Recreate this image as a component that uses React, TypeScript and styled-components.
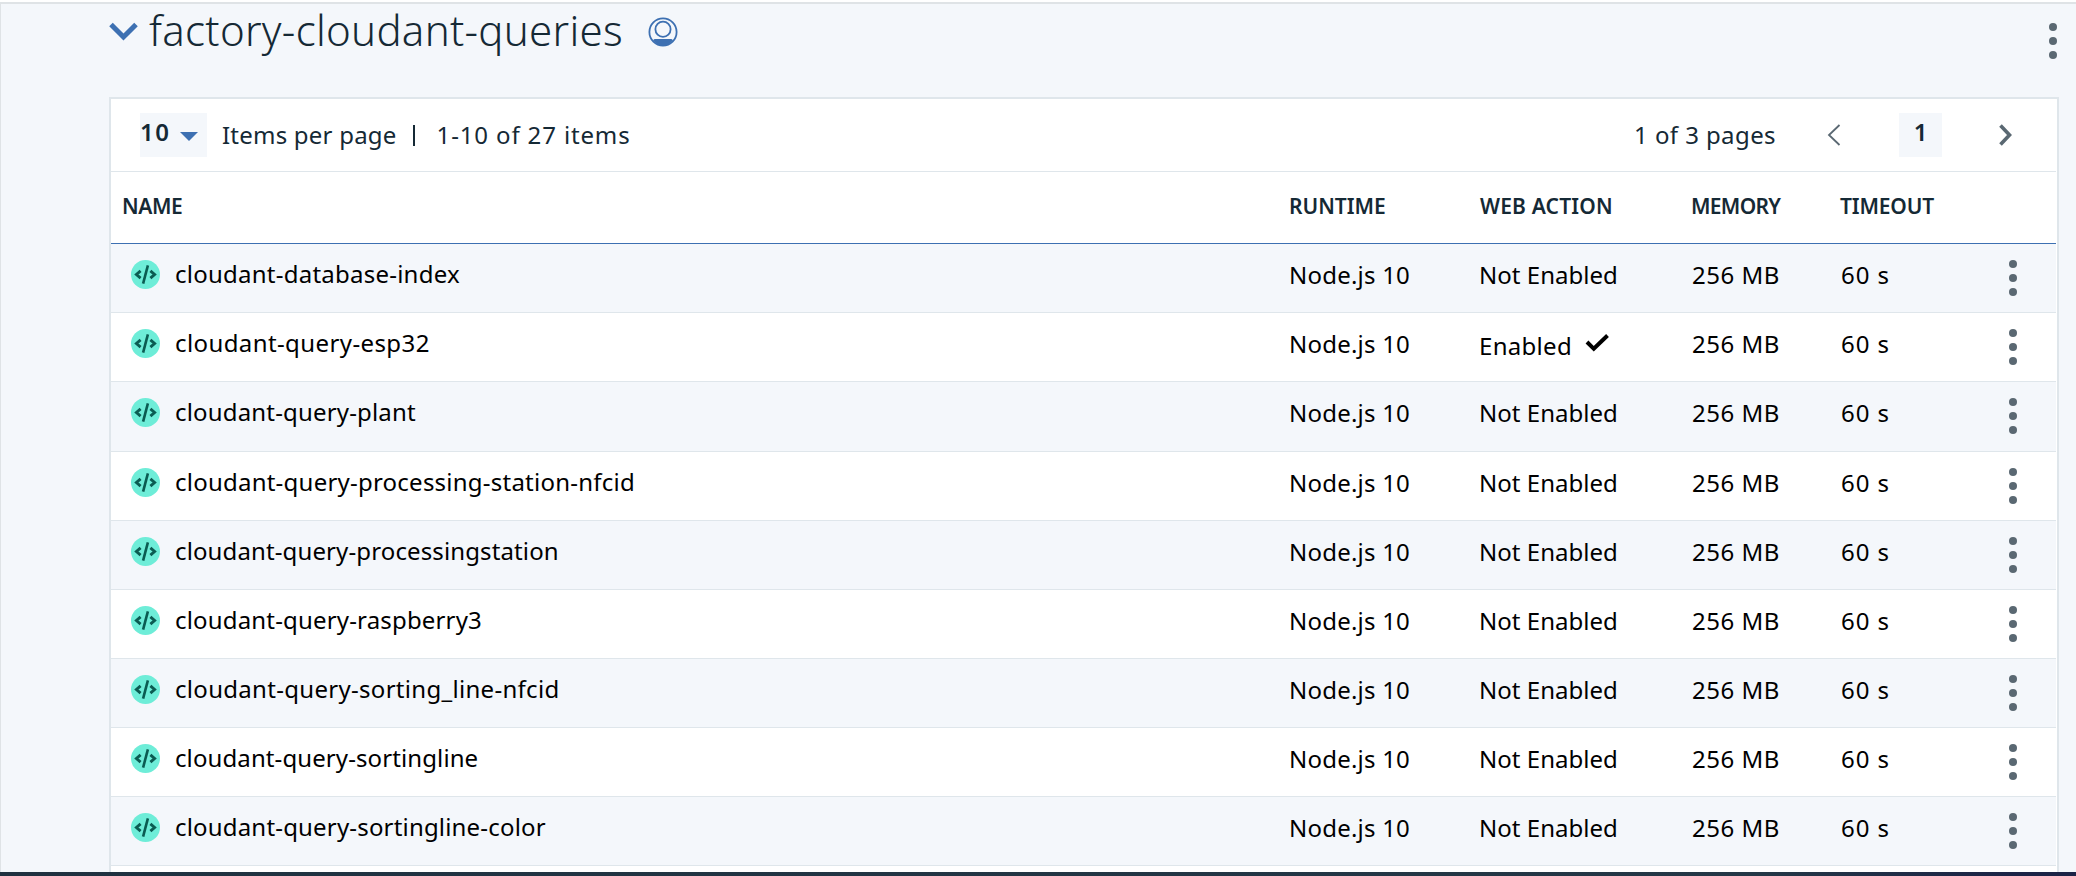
import React from "react";
import styled, { createGlobalStyle } from "styled-components";

const GlobalStyle = createGlobalStyle`
  *, *::before, *::after { box-sizing: border-box; }
  body {
    margin: 0;
    background: #f4f7fb;
    font-family: "Noto Sans", "Open Sans", sans-serif;
    color: #152935;
  }
`;

const Page = styled.main`
  height: 876px;
  display: flex;
  flex-direction: column;
  overflow: hidden;
  background: #f4f7fb;
`;

const TopStrip = styled.div`
  flex: none;
  height: 4px;
  background: #fff;
  border-bottom: 2px solid #dfe3e6;
`;

const Content = styled.div`
  flex: 1;
  min-height: 0;
  display: flex;
  flex-direction: column;
  overflow: hidden;
  border-left: 1px solid #dfe3e6;
  padding: 0 17px 0 108px;
`;

const BottomStrip = styled.div`
  flex: none;
  height: 4px;
  background: linear-gradient(90deg, #1f3140 0%, #243746 85%, #1b2346 97%);
`;

const PackageHeader = styled.header`
  flex: none;
  height: 93px;
  display: flex;
  align-items: flex-start;

  svg { flex: none; display: block; }
`;

const ToggleIcon = styled.svg`
  margin-top: 17px;
`;

const Title = styled.h1`
  margin: 1px 0 0 11px;
  font-size: 42px;
  line-height: 50px;
  font-weight: 300;
  letter-spacing: 0.29px;
  white-space: nowrap;
`;

const OwnerIcon = styled.svg`
  margin: 13px 0 0 25px;
`;

const MenuButton = styled.button<{ $top: number; $right: number }>`
  margin: ${(p) => p.$top}px ${(p) => p.$right}px 0 auto;
  padding: 0;
  border: 0;
  background: none;
  width: 8px;
  height: 36px;
  display: flex;
  flex-direction: column;
  justify-content: space-between;
`;

const Dot = styled.span`
  width: 8px;
  height: 8px;
  border-radius: 50%;
  background: #5a6872;
`;

const Card = styled.section`
  flex: none;
  border: 2px solid #dfe6eb;
  background: #fff;
  padding-right: 1px;
`;

const Pagination = styled.div`
  height: 73px;
  display: flex;
  align-items: center;
  border-bottom: 1px solid #dfe6eb;
  padding-left: 29px;
  font-size: 24px;
  line-height: 32px;
  white-space: nowrap;
`;

const PageSize = styled.button`
  width: 67px;
  height: 44px;
  padding: 0 9px 6px 0;
  border: 0;
  background: #f4f7fb;
  display: flex;
  align-items: center;
  justify-content: space-between;
  font: 600 24px/32px "Noto Sans", sans-serif;
  letter-spacing: 1.6px;
  color: #152935;

  svg { margin-top: 8px; }
`;

const Label = styled.span<{ $left?: number; $right?: number; $spacing: number }>`
  margin: 0 ${(p) => p.$right ?? 0}px 0 ${(p) => p.$left ?? 0}px;
  letter-spacing: ${(p) => p.$spacing}px;
`;

const Separator = styled.span`
  width: 2px;
  height: 21px;
  margin: 0 0 0 16px;
  background: #152935;
`;

const Pager = styled.div`
  margin-left: auto;
  padding-right: 44px;
  display: flex;
  align-items: center;

  svg { display: block; }
`;

const CurrentPage = styled.span`
  width: 43px;
  height: 44px;
  margin: 0 57px 0 58px;
  padding-bottom: 6px;
  display: flex;
  align-items: center;
  justify-content: center;
  background: #f4f7fb;
  font-weight: 600;
`;

const columns = "1178px 190px 212px 148px 1fr 47px";

const HeadRow = styled.div`
  height: 72px;
  display: grid;
  grid-template-columns: ${columns};
  align-items: center;
  padding-bottom: 3px;
  border-bottom: 1px solid #3d70b2;
  font-size: 21px;
  line-height: 28px;
  font-weight: 600;
  white-space: nowrap;
`;

const HeadCell = styled.span<{ $indent: number; $spacing: number }>`
  padding-left: ${(p) => p.$indent}px;
  letter-spacing: ${(p) => p.$spacing}px;
`;

const Row = styled.div<{ $striped: boolean; $height: number }>`
  height: ${(p) => p.$height}px;
  display: grid;
  grid-template-columns: ${columns};
  align-items: start;
  border-bottom: 1px solid #dfe6eb;
  background: ${(p) => (p.$striped ? "#f4f7fb" : "#fff")};
  font-size: 24px;
  line-height: 32px;
  color: #000;
  white-space: nowrap;
`;

const NameCell = styled.span<{ $spacing: number }>`
  padding: 14px 0 0 20px;
  display: flex;
  gap: 15px;
  letter-spacing: ${(p) => p.$spacing}px;

  svg { flex: none; margin-top: 2px; }
`;

const Cell = styled.span<{ $spacing: number; $indent?: number; $drop?: boolean }>`
  padding: ${(p) => (p.$drop ? 17 : 15)}px 0 0 ${(p) => p.$indent ?? 0}px;
  letter-spacing: ${(p) => p.$spacing}px;
  display: flex;

  svg { margin: 4px 0 0 13px; }
`;

function Overflow({ top, right }: { top: number; right: number }) {
  return (
    <MenuButton $top={top} $right={right} aria-label="More options">
      <Dot />
      <Dot />
      <Dot />
    </MenuButton>
  );
}

function ActionIcon() {
  return (
    <svg width="29" height="29" viewBox="0 0 29 29" fill="none">
      <circle cx="14.5" cy="14.5" r="14.5" fill="#6eedd8" />
      <g stroke="#0b5c52">
        <path d="M9.6 10.8 5.4 14.5l4.2 3.7M19.4 10.8l4.2 3.7-4.2 3.7" strokeWidth="2.9" />
        <path d="M16.9 5.4 12.1 23.6" strokeWidth="2.6" />
      </g>
    </svg>
  );
}

type Action = { name: string; spacing: number; web?: boolean; height?: number };

const actions: Action[] = [
  { name: "cloudant-database-index", spacing: 0.24 },
  { name: "cloudant-query-esp32", spacing: 0.4, web: true },
  { name: "cloudant-query-plant", spacing: 0.17, height: 70 },
  { name: "cloudant-query-processing-station-nfcid", spacing: 0.23 },
  { name: "cloudant-query-processingstation", spacing: 0.12 },
  { name: "cloudant-query-raspberry3", spacing: 0.17 },
  { name: "cloudant-query-sorting_line-nfcid", spacing: 0.3 },
  { name: "cloudant-query-sortingline", spacing: 0.1 },
  { name: "cloudant-query-sortingline-color", spacing: 0.18 },
];

export default function App() {
  return (
    <Page>
      <GlobalStyle />
      <TopStrip />
      <Content>
        <PackageHeader>
          <ToggleIcon width="29" height="20" viewBox="0 0 29 20">
            <path d="M2 3.4 14.5 16 27 3.4" fill="none" stroke="#3d70b2" strokeWidth="5" />
          </ToggleIcon>
          <Title>factory-cloudant-queries</Title>
          <OwnerIcon width="30" height="30" viewBox="0 0 30 30" fill="none" stroke="#3d70b2">
            <circle cx="15" cy="15" r="13.6" strokeWidth="1.8" />
            <circle cx="15" cy="12.2" r="7.6" strokeWidth="1.8" />
            <path d="M5 23.2c.6-.9 1.5-1.2 2.6-1.2h14.8c1.1 0 2 .3 2.6 1.200C22.600 26.600 19 28.600 15 28.600S7.400 26.600 5 23.200z" fill="#3d70b2" stroke="none" />
          </OwnerIcon>
          <Overflow top={19} right={2} />
        </PackageHeader>
        <Card>
          <Pagination>
            <PageSize>
              10
              <svg width="18" height="9" viewBox="0 0 18 9">
                <path d="M0 0h18L9 9z" fill="#3d70b2" />
              </svg>
            </PageSize>
            <Label $left={15} $spacing={0.22}>Items per page</Label>
            <Separator />
            <Label $left={22} $spacing={0.86}>1-10 of 27 items</Label>
            <Pager>
              <Label $right={51} $spacing={0.41}>1 of 3 pages</Label>
              <svg width="14" height="22" viewBox="0 0 14 22" fill="none">
                <path d="M12.5 1 2 11l10.5 10" stroke="#5a6872" strokeWidth="1.8" />
              </svg>
              <CurrentPage>1</CurrentPage>
              <svg width="13" height="22" viewBox="0 0 13 22" fill="none">
                <path d="M1.5 1.5 10.5 11l-9 9.500" stroke="#5a6872" strokeWidth="3.600" />
              </svg>
            </Pager>
          </Pagination>
          <HeadRow>
            <HeadCell $indent={11} $spacing={-0.42}>NAME</HeadCell>
            <HeadCell $indent={0} $spacing={0}>RUNTIME</HeadCell>
            <HeadCell $indent={1} $spacing={0.18}>WEB ACTION</HeadCell>
            <HeadCell $indent={0} $spacing={-0.7}>MEMORY</HeadCell>
            <HeadCell $indent={1} $spacing={-0.15}>TIMEOUT</HeadCell>
          </HeadRow>
          {actions.map((a, i) => (
            <Row key={a.name} $striped={i % 2 === 0} $height={a.height ?? 69}>
              <NameCell $spacing={a.spacing}>
                <ActionIcon />
                {a.name}
              </NameCell>
              <Cell $spacing={0.22}>Node.js 10</Cell>
              {a.web ? (
                <Cell $spacing={0.3} $drop>
                  Enabled
                  <svg width="25" height="18" viewBox="0 0 25 18" fill="none">
                    <path d="M2 8 8.800 14.800 22.500 1.500" stroke="#000" strokeWidth="4" />
                  </svg>
                </Cell>
              ) : (
                <Cell $spacing={0.03}>Not Enabled</Cell>
              )}
              <Cell $spacing={0.5} $indent={1}>256 MB</Cell>
              <Cell $spacing={0.9} $indent={2}>60 s</Cell>
              <Overflow top={16} right={39} />
            </Row>
          ))}
          <Row $striped={false} $height={69} />
        </Card>
      </Content>
      <BottomStrip />
    </Page>
  );
}
